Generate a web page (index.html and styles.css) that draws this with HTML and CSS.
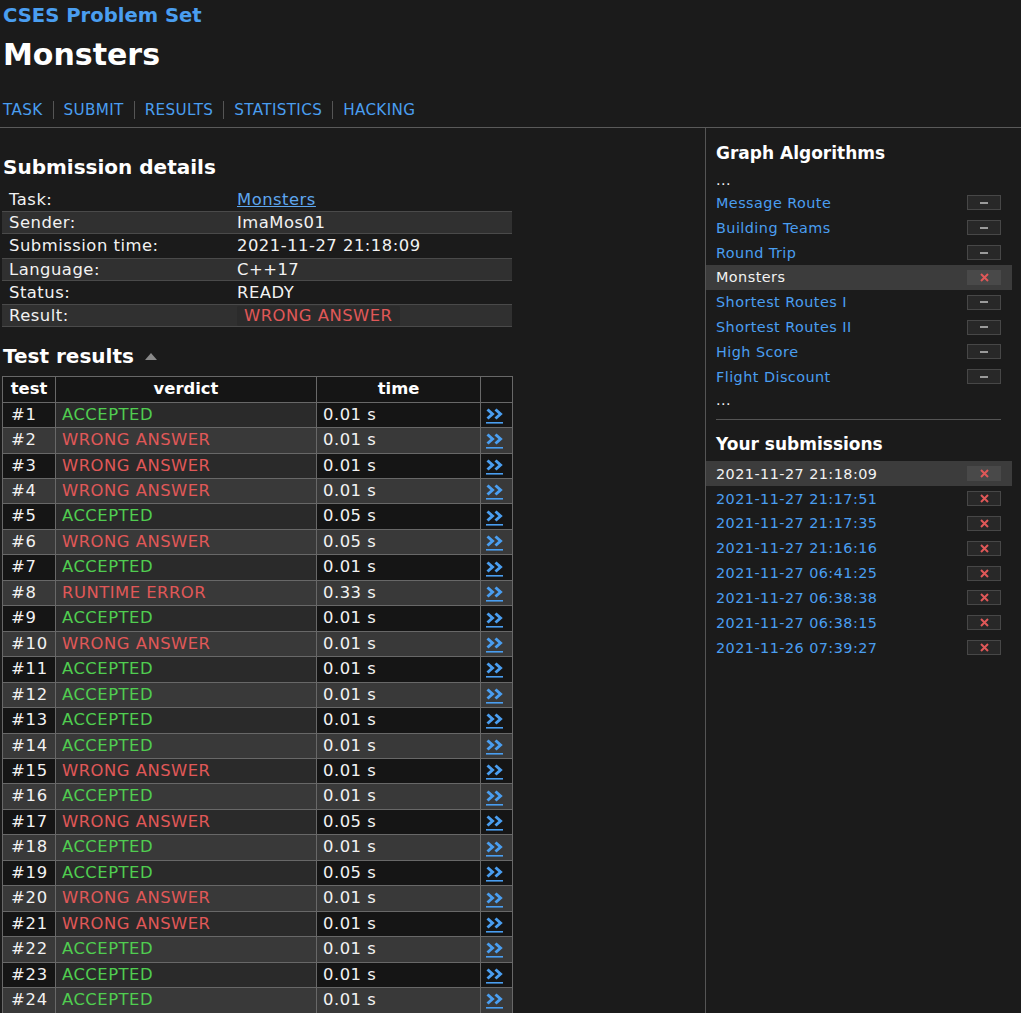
FILE: index.html
```html
<!DOCTYPE html>
<html>
<head>
<meta charset="utf-8">
<title>Monsters - CSES</title>
<link rel="stylesheet" href="styles.css">
</head>
<body>
<header class="header">
  <div class="brand"><a href="#">CSES Problem Set</a></div>
  <h1 class="title">Monsters</h1>
  <nav class="nav">
    <a href="#">TASK</a><span class="sep"></span>
    <a href="#">SUBMIT</a><span class="sep"></span>
    <a href="#">RESULTS</a><span class="sep"></span>
    <a href="#">STATISTICS</a><span class="sep"></span>
    <a href="#">HACKING</a>
  </nav>
</header>
<div class="main">
  <div class="content">
    <h2 class="section">Submission details</h2>
    <table class="details">
      <tr><td class="key">Task:</td><td><a class="task-link" href="#">Monsters</a></td></tr>
      <tr class="alt"><td class="key">Sender:</td><td>ImaMos01</td></tr>
      <tr><td class="key">Submission time:</td><td>2021-11-27 21:18:09</td></tr>
      <tr class="alt"><td class="key">Language:</td><td>C++17</td></tr>
      <tr><td class="key">Status:</td><td>READY</td></tr>
      <tr class="alt"><td class="key">Result:</td><td><span class="verdict-box">WRONG ANSWER</span></td></tr>
    </table>
    <h2 class="section tests">Test results <span class="tri"></span></h2>
    <table class="results">
      <colgroup><col class="c1"><col class="c2"><col class="c3"><col class="c4"></colgroup>
      <thead>
        <tr><th>test</th><th>verdict</th><th>time</th><th></th></tr>
      </thead>
      <tbody>
        <tr><td class="num">#1</td><td class="v ok">ACCEPTED</td><td>0.01 s</td><td class="go"><a href="#"><svg class="more" width="17" height="16" viewBox="0 0 17 16"><path d="M1.5 1.5 L6.5 6 L1.5 10.5 M9.5 1.5 L14.5 6 L9.5 10.5" fill="none" stroke="#4a9ef0" stroke-width="3"/><rect x="0" y="14" width="17" height="1.6" fill="#4a9ef0"/></svg></a></td></tr>
        <tr><td class="num">#2</td><td class="v bad">WRONG ANSWER</td><td>0.01 s</td><td class="go"><a href="#"><svg class="more" width="17" height="16" viewBox="0 0 17 16"><path d="M1.5 1.5 L6.5 6 L1.5 10.5 M9.5 1.5 L14.5 6 L9.5 10.5" fill="none" stroke="#4a9ef0" stroke-width="3"/><rect x="0" y="14" width="17" height="1.6" fill="#4a9ef0"/></svg></a></td></tr>
        <tr><td class="num">#3</td><td class="v bad">WRONG ANSWER</td><td>0.01 s</td><td class="go"><a href="#"><svg class="more" width="17" height="16" viewBox="0 0 17 16"><path d="M1.5 1.5 L6.5 6 L1.5 10.5 M9.5 1.5 L14.5 6 L9.5 10.5" fill="none" stroke="#4a9ef0" stroke-width="3"/><rect x="0" y="14" width="17" height="1.6" fill="#4a9ef0"/></svg></a></td></tr>
        <tr><td class="num">#4</td><td class="v bad">WRONG ANSWER</td><td>0.01 s</td><td class="go"><a href="#"><svg class="more" width="17" height="16" viewBox="0 0 17 16"><path d="M1.5 1.5 L6.5 6 L1.5 10.5 M9.5 1.5 L14.5 6 L9.5 10.5" fill="none" stroke="#4a9ef0" stroke-width="3"/><rect x="0" y="14" width="17" height="1.6" fill="#4a9ef0"/></svg></a></td></tr>
        <tr><td class="num">#5</td><td class="v ok">ACCEPTED</td><td>0.05 s</td><td class="go"><a href="#"><svg class="more" width="17" height="16" viewBox="0 0 17 16"><path d="M1.5 1.5 L6.5 6 L1.5 10.5 M9.5 1.5 L14.5 6 L9.5 10.5" fill="none" stroke="#4a9ef0" stroke-width="3"/><rect x="0" y="14" width="17" height="1.6" fill="#4a9ef0"/></svg></a></td></tr>
        <tr><td class="num">#6</td><td class="v bad">WRONG ANSWER</td><td>0.05 s</td><td class="go"><a href="#"><svg class="more" width="17" height="16" viewBox="0 0 17 16"><path d="M1.5 1.5 L6.5 6 L1.5 10.5 M9.5 1.5 L14.5 6 L9.5 10.5" fill="none" stroke="#4a9ef0" stroke-width="3"/><rect x="0" y="14" width="17" height="1.6" fill="#4a9ef0"/></svg></a></td></tr>
        <tr><td class="num">#7</td><td class="v ok">ACCEPTED</td><td>0.01 s</td><td class="go"><a href="#"><svg class="more" width="17" height="16" viewBox="0 0 17 16"><path d="M1.5 1.5 L6.5 6 L1.5 10.5 M9.5 1.5 L14.5 6 L9.5 10.5" fill="none" stroke="#4a9ef0" stroke-width="3"/><rect x="0" y="14" width="17" height="1.6" fill="#4a9ef0"/></svg></a></td></tr>
        <tr><td class="num">#8</td><td class="v bad">RUNTIME ERROR</td><td>0.33 s</td><td class="go"><a href="#"><svg class="more" width="17" height="16" viewBox="0 0 17 16"><path d="M1.5 1.5 L6.5 6 L1.5 10.5 M9.5 1.5 L14.5 6 L9.5 10.5" fill="none" stroke="#4a9ef0" stroke-width="3"/><rect x="0" y="14" width="17" height="1.6" fill="#4a9ef0"/></svg></a></td></tr>
        <tr><td class="num">#9</td><td class="v ok">ACCEPTED</td><td>0.01 s</td><td class="go"><a href="#"><svg class="more" width="17" height="16" viewBox="0 0 17 16"><path d="M1.5 1.5 L6.5 6 L1.5 10.5 M9.5 1.5 L14.5 6 L9.5 10.5" fill="none" stroke="#4a9ef0" stroke-width="3"/><rect x="0" y="14" width="17" height="1.6" fill="#4a9ef0"/></svg></a></td></tr>
        <tr><td class="num">#10</td><td class="v bad">WRONG ANSWER</td><td>0.01 s</td><td class="go"><a href="#"><svg class="more" width="17" height="16" viewBox="0 0 17 16"><path d="M1.5 1.5 L6.5 6 L1.5 10.5 M9.5 1.5 L14.5 6 L9.5 10.5" fill="none" stroke="#4a9ef0" stroke-width="3"/><rect x="0" y="14" width="17" height="1.6" fill="#4a9ef0"/></svg></a></td></tr>
        <tr><td class="num">#11</td><td class="v ok">ACCEPTED</td><td>0.01 s</td><td class="go"><a href="#"><svg class="more" width="17" height="16" viewBox="0 0 17 16"><path d="M1.5 1.5 L6.5 6 L1.5 10.5 M9.5 1.5 L14.5 6 L9.5 10.5" fill="none" stroke="#4a9ef0" stroke-width="3"/><rect x="0" y="14" width="17" height="1.6" fill="#4a9ef0"/></svg></a></td></tr>
        <tr><td class="num">#12</td><td class="v ok">ACCEPTED</td><td>0.01 s</td><td class="go"><a href="#"><svg class="more" width="17" height="16" viewBox="0 0 17 16"><path d="M1.5 1.5 L6.5 6 L1.5 10.5 M9.5 1.5 L14.5 6 L9.5 10.5" fill="none" stroke="#4a9ef0" stroke-width="3"/><rect x="0" y="14" width="17" height="1.6" fill="#4a9ef0"/></svg></a></td></tr>
        <tr><td class="num">#13</td><td class="v ok">ACCEPTED</td><td>0.01 s</td><td class="go"><a href="#"><svg class="more" width="17" height="16" viewBox="0 0 17 16"><path d="M1.5 1.5 L6.5 6 L1.5 10.5 M9.5 1.5 L14.5 6 L9.5 10.5" fill="none" stroke="#4a9ef0" stroke-width="3"/><rect x="0" y="14" width="17" height="1.6" fill="#4a9ef0"/></svg></a></td></tr>
        <tr><td class="num">#14</td><td class="v ok">ACCEPTED</td><td>0.01 s</td><td class="go"><a href="#"><svg class="more" width="17" height="16" viewBox="0 0 17 16"><path d="M1.5 1.5 L6.5 6 L1.5 10.5 M9.5 1.5 L14.5 6 L9.5 10.5" fill="none" stroke="#4a9ef0" stroke-width="3"/><rect x="0" y="14" width="17" height="1.6" fill="#4a9ef0"/></svg></a></td></tr>
        <tr><td class="num">#15</td><td class="v bad">WRONG ANSWER</td><td>0.01 s</td><td class="go"><a href="#"><svg class="more" width="17" height="16" viewBox="0 0 17 16"><path d="M1.5 1.5 L6.5 6 L1.5 10.5 M9.5 1.5 L14.5 6 L9.5 10.5" fill="none" stroke="#4a9ef0" stroke-width="3"/><rect x="0" y="14" width="17" height="1.6" fill="#4a9ef0"/></svg></a></td></tr>
        <tr><td class="num">#16</td><td class="v ok">ACCEPTED</td><td>0.01 s</td><td class="go"><a href="#"><svg class="more" width="17" height="16" viewBox="0 0 17 16"><path d="M1.5 1.5 L6.5 6 L1.5 10.5 M9.5 1.5 L14.5 6 L9.5 10.5" fill="none" stroke="#4a9ef0" stroke-width="3"/><rect x="0" y="14" width="17" height="1.6" fill="#4a9ef0"/></svg></a></td></tr>
        <tr><td class="num">#17</td><td class="v bad">WRONG ANSWER</td><td>0.05 s</td><td class="go"><a href="#"><svg class="more" width="17" height="16" viewBox="0 0 17 16"><path d="M1.5 1.5 L6.5 6 L1.5 10.5 M9.5 1.5 L14.5 6 L9.5 10.5" fill="none" stroke="#4a9ef0" stroke-width="3"/><rect x="0" y="14" width="17" height="1.6" fill="#4a9ef0"/></svg></a></td></tr>
        <tr><td class="num">#18</td><td class="v ok">ACCEPTED</td><td>0.01 s</td><td class="go"><a href="#"><svg class="more" width="17" height="16" viewBox="0 0 17 16"><path d="M1.5 1.5 L6.5 6 L1.5 10.5 M9.5 1.5 L14.5 6 L9.5 10.5" fill="none" stroke="#4a9ef0" stroke-width="3"/><rect x="0" y="14" width="17" height="1.6" fill="#4a9ef0"/></svg></a></td></tr>
        <tr><td class="num">#19</td><td class="v ok">ACCEPTED</td><td>0.05 s</td><td class="go"><a href="#"><svg class="more" width="17" height="16" viewBox="0 0 17 16"><path d="M1.5 1.5 L6.5 6 L1.5 10.5 M9.5 1.5 L14.5 6 L9.5 10.5" fill="none" stroke="#4a9ef0" stroke-width="3"/><rect x="0" y="14" width="17" height="1.6" fill="#4a9ef0"/></svg></a></td></tr>
        <tr><td class="num">#20</td><td class="v bad">WRONG ANSWER</td><td>0.01 s</td><td class="go"><a href="#"><svg class="more" width="17" height="16" viewBox="0 0 17 16"><path d="M1.5 1.5 L6.5 6 L1.5 10.5 M9.5 1.5 L14.5 6 L9.5 10.5" fill="none" stroke="#4a9ef0" stroke-width="3"/><rect x="0" y="14" width="17" height="1.6" fill="#4a9ef0"/></svg></a></td></tr>
        <tr><td class="num">#21</td><td class="v bad">WRONG ANSWER</td><td>0.01 s</td><td class="go"><a href="#"><svg class="more" width="17" height="16" viewBox="0 0 17 16"><path d="M1.5 1.5 L6.5 6 L1.5 10.5 M9.5 1.5 L14.5 6 L9.5 10.5" fill="none" stroke="#4a9ef0" stroke-width="3"/><rect x="0" y="14" width="17" height="1.6" fill="#4a9ef0"/></svg></a></td></tr>
        <tr><td class="num">#22</td><td class="v ok">ACCEPTED</td><td>0.01 s</td><td class="go"><a href="#"><svg class="more" width="17" height="16" viewBox="0 0 17 16"><path d="M1.5 1.5 L6.5 6 L1.5 10.5 M9.5 1.5 L14.5 6 L9.5 10.5" fill="none" stroke="#4a9ef0" stroke-width="3"/><rect x="0" y="14" width="17" height="1.6" fill="#4a9ef0"/></svg></a></td></tr>
        <tr><td class="num">#23</td><td class="v ok">ACCEPTED</td><td>0.01 s</td><td class="go"><a href="#"><svg class="more" width="17" height="16" viewBox="0 0 17 16"><path d="M1.5 1.5 L6.5 6 L1.5 10.5 M9.5 1.5 L14.5 6 L9.5 10.5" fill="none" stroke="#4a9ef0" stroke-width="3"/><rect x="0" y="14" width="17" height="1.6" fill="#4a9ef0"/></svg></a></td></tr>
        <tr><td class="num">#24</td><td class="v ok">ACCEPTED</td><td>0.01 s</td><td class="go"><a href="#"><svg class="more" width="17" height="16" viewBox="0 0 17 16"><path d="M1.5 1.5 L6.5 6 L1.5 10.5 M9.5 1.5 L14.5 6 L9.5 10.5" fill="none" stroke="#4a9ef0" stroke-width="3"/><rect x="0" y="14" width="17" height="1.6" fill="#4a9ef0"/></svg></a></td></tr>
      </tbody>
    </table>
  </div>
  <aside class="sidebar">
    <h3 class="side-title">Graph Algorithms</h3>
    <div class="dots">...</div>
    <ul class="list">
      <li class="item"><a href="#">Message Route</a><span class="st"><span class="dash"></span></span></li>
      <li class="item"><a href="#">Building Teams</a><span class="st"><span class="dash"></span></span></li>
      <li class="item"><a href="#">Round Trip</a><span class="st"><span class="dash"></span></span></li>
      <li class="item current"><span>Monsters</span><span class="st cur"><svg class="x" width="9" height="9" viewBox="0 0 9 9"><path d="M1 1 L8 8 M8 1 L1 8" stroke="#e05858" stroke-width="2"/></svg></span></li>
      <li class="item"><a href="#">Shortest Routes I</a><span class="st"><span class="dash"></span></span></li>
      <li class="item"><a href="#">Shortest Routes II</a><span class="st"><span class="dash"></span></span></li>
      <li class="item"><a href="#">High Score</a><span class="st"><span class="dash"></span></span></li>
      <li class="item"><a href="#">Flight Discount</a><span class="st"><span class="dash"></span></span></li>
    </ul>
    <div class="dots trailing">...</div>
    <hr class="rule">
    <h3 class="side-title subs">Your submissions</h3>
    <ul class="list">
      <li class="item current"><span>2021-11-27 21:18:09</span><span class="st cur"><svg class="x" width="9" height="9" viewBox="0 0 9 9"><path d="M1 1 L8 8 M8 1 L1 8" stroke="#e05858" stroke-width="2"/></svg></span></li>
      <li class="item"><a href="#">2021-11-27 21:17:51</a><span class="st"><svg class="x" width="9" height="9" viewBox="0 0 9 9"><path d="M1 1 L8 8 M8 1 L1 8" stroke="#e05858" stroke-width="2"/></svg></span></li>
      <li class="item"><a href="#">2021-11-27 21:17:35</a><span class="st"><svg class="x" width="9" height="9" viewBox="0 0 9 9"><path d="M1 1 L8 8 M8 1 L1 8" stroke="#e05858" stroke-width="2"/></svg></span></li>
      <li class="item"><a href="#">2021-11-27 21:16:16</a><span class="st"><svg class="x" width="9" height="9" viewBox="0 0 9 9"><path d="M1 1 L8 8 M8 1 L1 8" stroke="#e05858" stroke-width="2"/></svg></span></li>
      <li class="item"><a href="#">2021-11-27 06:41:25</a><span class="st"><svg class="x" width="9" height="9" viewBox="0 0 9 9"><path d="M1 1 L8 8 M8 1 L1 8" stroke="#e05858" stroke-width="2"/></svg></span></li>
      <li class="item"><a href="#">2021-11-27 06:38:38</a><span class="st"><svg class="x" width="9" height="9" viewBox="0 0 9 9"><path d="M1 1 L8 8 M8 1 L1 8" stroke="#e05858" stroke-width="2"/></svg></span></li>
      <li class="item"><a href="#">2021-11-27 06:38:15</a><span class="st"><svg class="x" width="9" height="9" viewBox="0 0 9 9"><path d="M1 1 L8 8 M8 1 L1 8" stroke="#e05858" stroke-width="2"/></svg></span></li>
      <li class="item"><a href="#">2021-11-26 07:39:27</a><span class="st"><svg class="x" width="9" height="9" viewBox="0 0 9 9"><path d="M1 1 L8 8 M8 1 L1 8" stroke="#e05858" stroke-width="2"/></svg></span></li>
    </ul>
  </aside>
</div>
</body>
</html>
```
FILE: styles.css
```css
html, body {
  margin: 0;
  padding: 0;
  background: #1b1b1b;
  color: #f2f2f2;
  font-family: "DejaVu Sans", Verdana, sans-serif;
}
a {
  color: #4a9ef0;
  text-decoration: none;
}

/* header */
.header {
  padding-left: 3px;
}
.brand {
  font-size: 19.6px;
  font-weight: bold;
  line-height: 24px;
  padding-top: 4px;
}
.title {
  margin: 8px 0 0 0;
  font-size: 30px;
  line-height: 38px;
  font-weight: bold;
  color: #ffffff;
}
.nav {
  margin-top: 26px;
  height: 20px;
  display: flex;
  align-items: center;
  font-size: 15.2px;
  letter-spacing: 0.35px;
  line-height: 20px;
  padding-bottom: 7px;
}
.nav .sep {
  width: 1px;
  height: 18px;
  background: #555;
  margin: 0 10px;
}

/* main */
.main {
  display: flex;
  border-top: 1px solid #5a5a5a;
  min-height: 900px;
}
.content {
  width: 706px;
  flex: none;
  box-sizing: border-box;
  padding-left: 2px;
  border-right: 1px solid #555;
}
.section {
  margin: 27px 0 0 1px;
  font-size: 20px;
  line-height: 24px;
  font-weight: bold;
  color: #fff;
}
.section.tests {
  margin-top: 17px;
}
.tri {
  display: inline-block;
  width: 0;
  height: 0;
  border-left: 6.5px solid transparent;
  border-right: 6.5px solid transparent;
  border-bottom: 7px solid #8a8a8a;
  margin-left: 4px;
  vertical-align: 3px;
}

/* details table */
.details {
  margin-top: 9px;
  width: 510px;
  border-collapse: separate;
  border-spacing: 0;
  font-size: 16.4px;
  letter-spacing: 0.5px;
}
.details td {
  line-height: 23.2px;
  height: 23.2px;
  padding: 0 0 0 7px;
  white-space: nowrap;
}
.details td.key {
  width: 221px;
}
.details tr.alt td {
  background: #303030;
  box-shadow: inset 0 1px 0 #4a4a4a, inset 0 -1px 0 #4a4a4a;
}
.task-link {
  color: #5ea6ee;
  text-decoration: underline;
}
.verdict-box {
  display: inline-block;
  background: #2b2b2b;
  color: #e05858;
  padding: 0 7px;
  line-height: 20px;
  border-radius: 2px;
}

/* results table */
.results {
  margin-top: 8px;
  width: 511px;
  table-layout: fixed;
  border-collapse: collapse;
  font-size: 16.4px;
  letter-spacing: 0.5px;
}
.results col.c1 { width: 53px; }
.results col.c2 { width: 261px; }
.results col.c3 { width: 164px; }
.results col.c4 { width: 32px; }
.results th, .results td {
  border: 1px solid #686868;
  height: 24.46px;
  line-height: 24.46px;
  padding: 0 0 0 6px;
  white-space: nowrap;
  overflow: hidden;
}
.results th {
  padding: 0;
  text-align: center;
  font-weight: bold;
  letter-spacing: 0;
  background: #151515;
  color: #fff;
}
.results td.num {
  padding-left: 8px;
  letter-spacing: 0.8px;
}
.results tbody tr:nth-child(odd) td {
  background: #151515;
}
.results tbody tr:nth-child(odd) td.v {
  background: #2a2a2a;
}
.results tbody tr:nth-child(even) td {
  background: #393939;
}
.results td.ok { color: #50cd50; }
.results td.bad { color: #e05858; }
.results td.go {
  padding-left: 5px;
}
.more {
  display: block;
  margin-top: 2px;
}

/* sidebar */
.sidebar {
  flex: 1;
  padding: 0 20px 0 10px;
  font-size: 14.4px;
  letter-spacing: 0.45px;
}
.side-title {
  margin: 14px 0 0 0;
  font-size: 17px;
  line-height: 22px;
  font-weight: bold;
  letter-spacing: 0;
  color: #fff;
}
.side-title.subs {
  margin-top: 13px;
  margin-bottom: 6.5px;
}
.dots {
  line-height: 18.5px;
  height: 18.5px;
}
.side-title + .dots {
  margin-top: 7px;
  margin-bottom: 1px;
}
.dots.trailing {
  margin-top: 2px;
}
.list {
  list-style: none;
  margin: 0;
  padding: 0;
}
.item {
  height: 24.85px;
  display: flex;
  align-items: center;
  justify-content: space-between;
  margin: 0 -11px 0 -10px;
  padding: 0 11px 0 10px;
}
.item.current {
  background: #3c3c3c;
  color: #f2f2f2;
}
.st {
  width: 34px;
  height: 15px;
  box-sizing: border-box;
  border: 1px solid #474747;
  background: #282828;
  display: flex;
  align-items: center;
  justify-content: center;
}
.st.cur {
  background: #494949;
  border-color: #494949;
}
.dash {
  width: 8px;
  height: 2px;
  background: #9a9a9a;
}
.x {
  display: block;
}
.rule {
  border: none;
  border-top: 1px solid #555;
  margin: 9px 0 0 0;
  height: 0;
}
```
